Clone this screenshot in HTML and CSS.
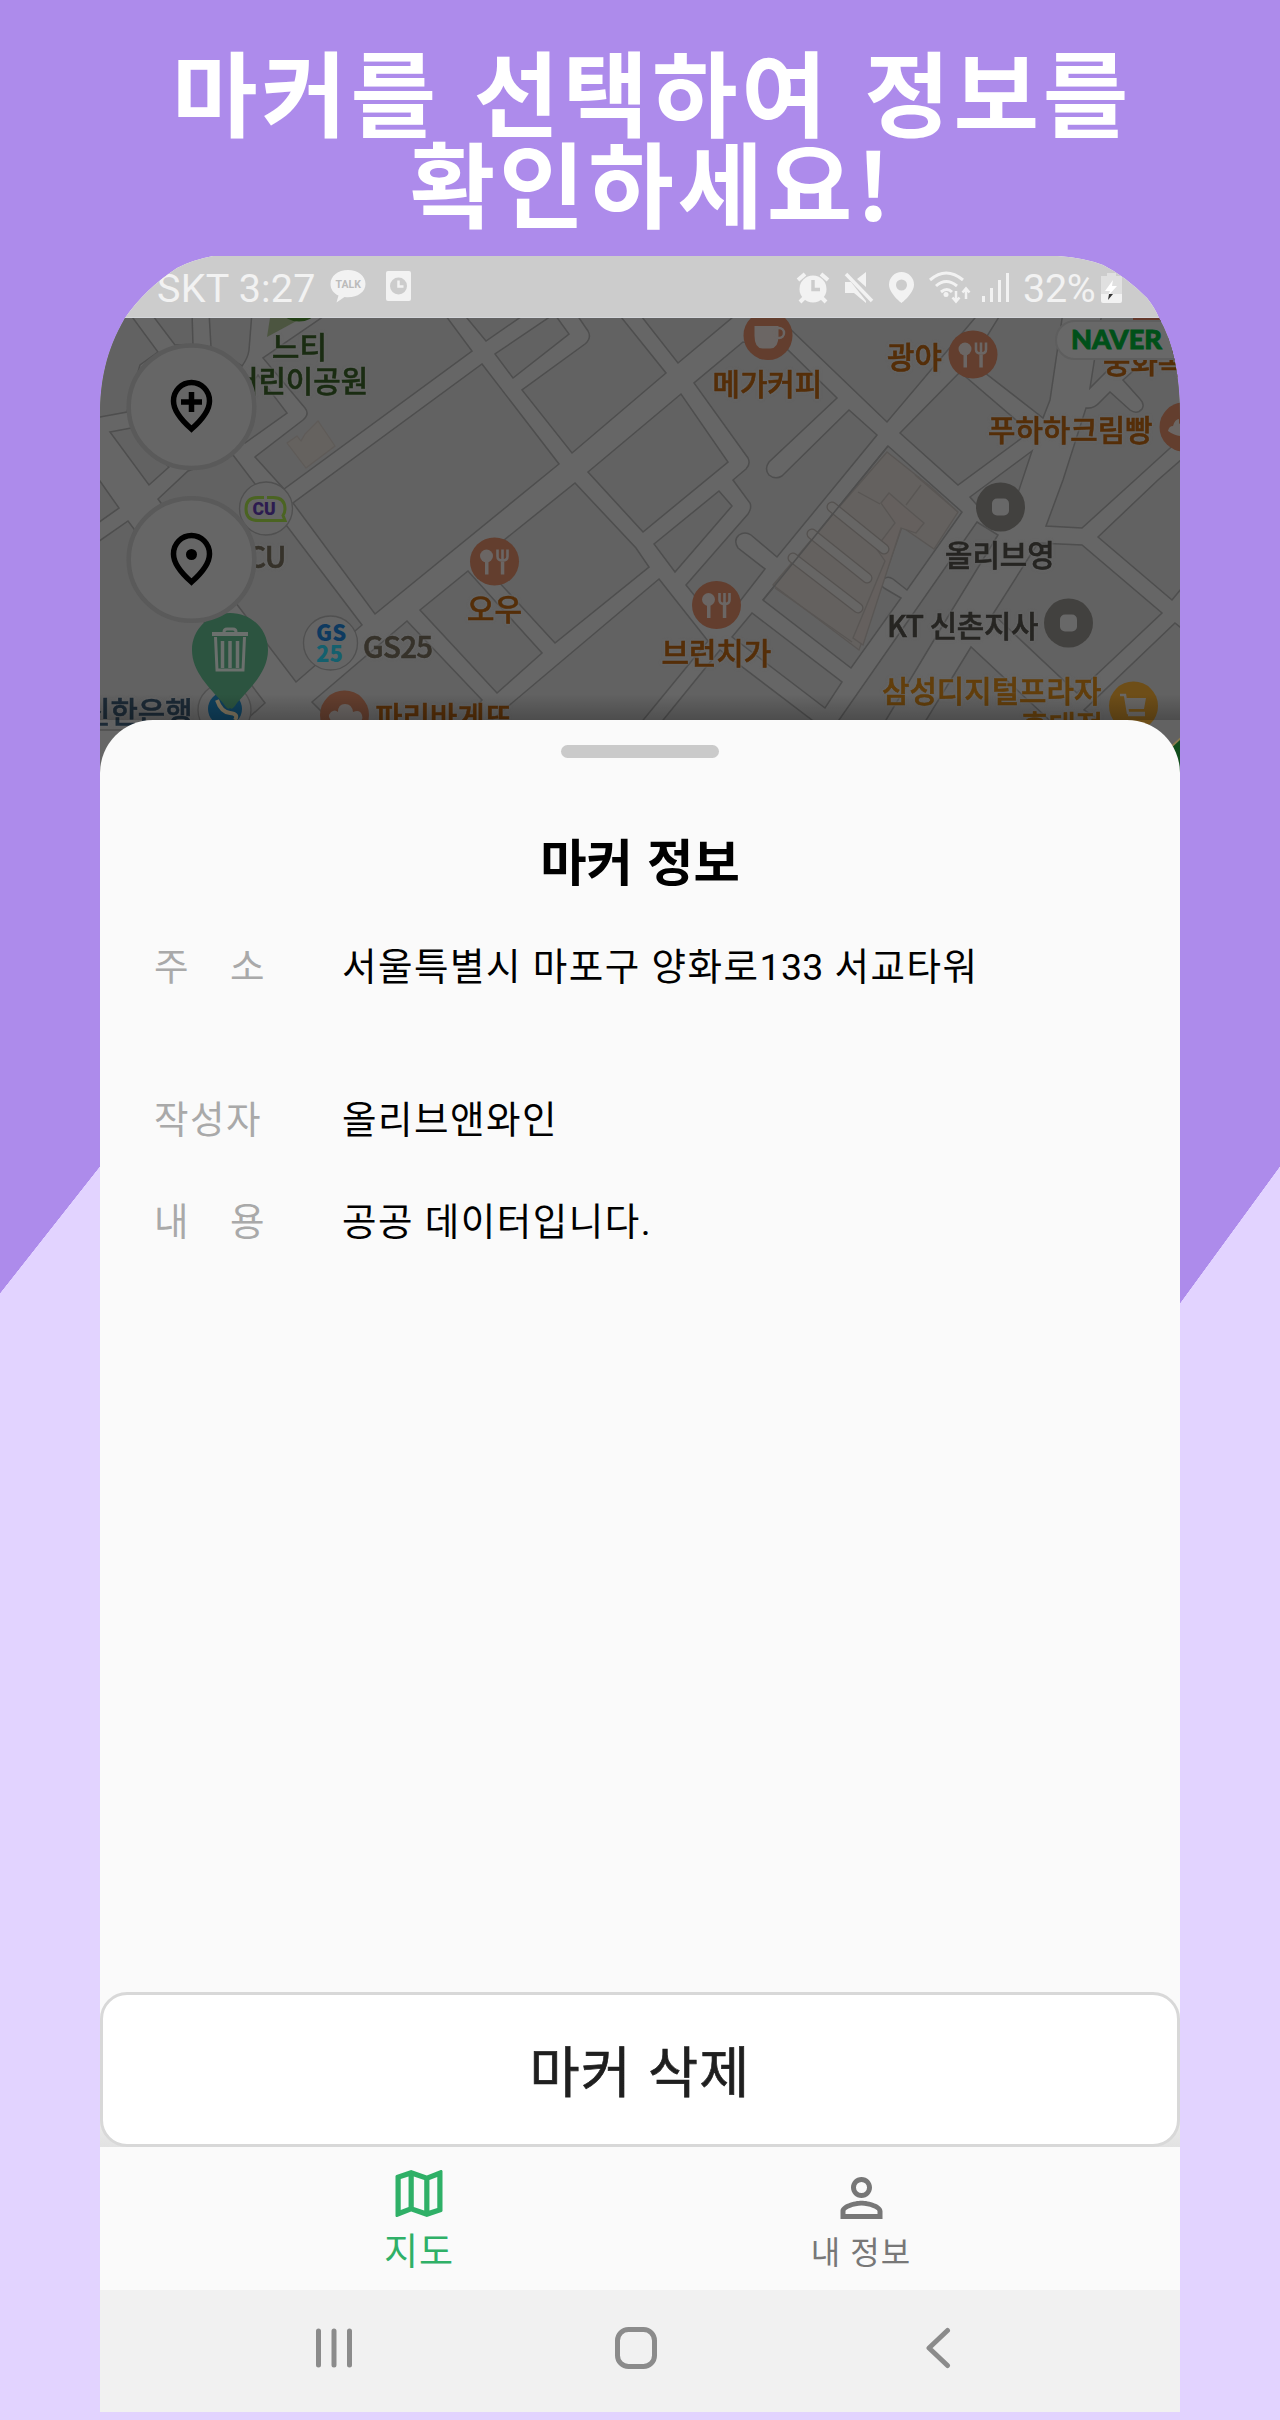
FILE: index.html
```html
<!DOCTYPE html>
<html lang="ko">
<head>
<meta charset="utf-8">
<title>마커 정보</title>
<link rel="stylesheet" href="styles.css">
</head>
<body>
<main class="promo">
  <h1 class="headline">마커를 선택하여 정보를<br>확인하세요!</h1>
  <section class="phone">
    <header class="status">
      <span class="carrier">SKT 3:27</span>
      <svg class="status-left" viewBox="330 270 82 36" width="82" height="36">
        <path class="lit" d="M348 271c-10 0-17.500 6-17.500 14 0 5 3 9.500 8 11.500l-2 7 8-5.500c11 1.500 21-4 21-13 0-8-7.500-14-17.500-14z"/>
        <text class="talk" x="335.500" y="289">TALK</text>
        <rect class="lit" x="386" y="272" width="25" height="30" rx="2"/>
        <circle class="cut" cx="398.500" cy="287" r="8.500"/>
        <path d="M398.500 281.500v6h5" fill="none" stroke="#f2f2f2" stroke-width="2.500"/>
      </svg>
      <svg class="status-right" viewBox="796 268 216 38" width="216" height="38">
        <circle class="lit" cx="813" cy="288" r="13.500"/>
        <path class="lit-line" d="M798 279l7-6M821 273l7 6M800 301l5-5M826 301l-5-5" stroke-width="4"/>
        <path d="M813 279v9.500h7" fill="none" stroke="#ccc" stroke-width="3.500"/>
        <path class="lit" d="M845 281h6l15 19v2l-12-10h-9zM857 278l9-7v15z"/>
        <path class="lit-line" d="M846 273l26 27" stroke-width="3.500"/>
        <path class="lit" fill-rule="evenodd" d="M901.500 271a12.500 12.500 0 0 0-12.500 12.500c0 9 12.500 18.500 12.500 18.500s12.500-9.500 12.500-18.500a12.500 12.500 0 0 0-12.500-12.500zm0 7.500a5.500 5.500 0 1 1 0 11 5.500 5.500 0 0 1 0-11z"/>
        <path class="lit-line" d="M930 279q16-14 33 0M936 285q10-9 21 0M941 291q6-5 11 0" stroke-width="3"/>
        <circle class="lit" cx="946" cy="293.500" r="2.500"/>
        <path class="lit-line" d="M956 290v9M952.500 296.500l3.500 4 3.500-4M966 298v-9M962.500 291.500l3.500-4 3.500 4" stroke-width="2.500"/>
        <path class="lit" d="M982 295h3v6h-3zM990 287h3v14h-3zM998 279h3v22h-3zM1006 272h3v29h-3z"/>
      </svg>
      <span class="battery">32%</span>
      <svg class="charge" viewBox="1101 270 22 33" width="22" height="33">
        <path fill="#e0e0e0" d="M1107 272h9v3h6v18h-21v-18h6z"/>
        <path class="lit" d="M1101 293h21v7q0 2-2 2h-17q-2 0-2-2z"/>
        <path fill="#fff" d="M1113 279l-8 11h5l-2 5 9-10h-5z"/>
        <path fill="#333" d="M1109 293h4l-5 6z"/>
      </svg>
    </header>

    <div class="stage">
      <svg class="map" viewBox="100 318 1080 462" width="1080" height="462">
        <defs>
          <g id="dish">
            <ellipse class="food" rx="24.500" ry="24"/>
            <circle class="pale" cx="-8" cy="-5.500" r="6.500"/>
            <path class="pale" d="M-9.500 0h3.500v13h-3.500zM6.300 0h3.500v13h-3.500z"/>
            <path fill="none" stroke="#6b6664" stroke-width="2.600" d="M3-12v7q0 4 5 4t5-4v-7M8-12v11"/>
          </g>
          <linearGradient id="fade" x1="0" y1="0" x2="0" y2="1">
            <stop offset="0" stop-color="#000" stop-opacity="0"/>
            <stop offset="1" stop-color="#000" stop-opacity=".22"/>
          </linearGradient>
        </defs>
        <rect x="100" y="318" width="1080" height="462" fill="#666"/>
        <g class="block">
          <path d="M90 310L127 310 158 352 140 365 127 412 95 418zM150 312L175 345 193 345 192 312zM209 312L211 347 242 366Q248 358 249 350L252 312z"/>
          <path d="M110 432L131 428 169 467 149 485zM95 474L119 508 95 525z"/>
          <path d="M330 312L263 358 305 408Q310 414 303 420L255 457 284 489 472 351 443 312z"/>
          <path d="M258 375L287 413 245 443 225 420z"/>
          <path d="M233 455L362 625 296 682 188 540 158 499 188 471z"/>
          <path d="M482 364L559 464 375 614 293 503z"/>
          <path d="M95 544L128 521 265 703 235 730 95 730z"/>
          <path d="M312 702L407 621 482 700 455 730 340 730zM420 610L468 571 542 653 497 693z"/>
          <path d="M488 553L575 483 636 548 649 567 555 643 485 567zM588 472L681 394 728 462 643 532z"/>
          <path d="M617 312L666 373 572 453 522 390 585 344Q592 338 588 331L575 312zM553 312L569 334 513 378 495 354 557 312zM462 312L486 341 528 312zM638 312L678 363 739 312z"/>
          <path d="M743 342L694 383 748 458Q751 464 746 469L733 480 750 503Q752 508 748 514L686 585 702 605 737 605 765 569 738 548Q733 540 739 535 745 531 751 535L777 557 877 435 849 410 782 476Q775 480 769 475 764 469 769 462L837 398 788 350z"/>
          <path d="M654 544L719 491 732 506 675 572zM659 579L708 641 635 730 480 730zM720 650L655 730 825 730z"/>
          <path d="M732 637L752 613 842 682 825 708zM763 600L888 446 962 512 907 590 893 579Q887 575 883 580 880 585 884 588L901 598 851 668z"/>
          <path d="M760 300L887 422 980 312zM1002 312L971 362 1043 418 1050 400 1063 312zM900 433L960 372 1030 432 958 485z"/>
          <path d="M1032 451L970 497 990 520 1014 505zM1102 312L1090 388 1112 366 1170 312z"/>
          <path d="M1086 408Q1094 409 1100 402L1110 392 1130 410Q1137 415 1142 409 1145 404 1140 399L1123 380 1190 320 1190 430 1135 480 1082 528 1046 526 1063 480z"/>
          <path d="M1098 537L1158 480 1190 452 1190 578 1172 600zM1038 543L1082 545 1162 613 1077 693 993 614z"/>
          <path d="M977 522L998 535 952 610 880 730 832 730zM971 647L920 730 1060 730zM1175 623L1190 635 1190 780 1084 710z"/>
        </g>
        <path fill="#4c5540" d="M270 318H302L267 337z"/>
        <ellipse cx="299" cy="312" rx="16" ry="9.500" fill="#234016"/>
        <path fill="#65625f" stroke="#5f5b58" stroke-width="1.200" d="M287 443L297 436 301 441 305 434 318 421 335 446 306 468z"/>
        <g fill="#64615f" stroke="#595654" stroke-width="1.300">
          <path d="M887 452L931 487 958 512 934 549 902 527 859 650 773 585 840 506z"/>
          <path fill="#65605e" d="M881 503L889 493 905 507 924 523 916 533 901 528 863 645 853 638 885 561 876 548 895 523z"/>
          <path fill="none" d="M858 492L880 504M921 485L906 505M775 588L852 642M915 475L958 512"/>
        </g>
        <path class="alley-edge" d="M832 507L884 549M812 534L867 578M793 558L858 608"/>
        <path class="alley" d="M832 507L884 549M812 534L867 578M793 558L858 608"/>
        <path class="edge" d="M888 446L763 600"/>

        <circle class="brand" cx="266" cy="508.500" r="26.500"/>
        <path d="M264 497.500h-6q-12 0-12 11.500t12 11.500h27l-2-5q2-3 2-6.500 0-11.500-12-11.500h-6" fill="none" stroke="#4b6422" stroke-width="3"/>
        <text class="cu" x="252.500" y="514.500">CU</text>
        <circle class="brand" cx="330.500" cy="643" r="27"/>
        <text class="gs" x="316" y="641">GS</text>
        <text class="gs teal" x="316" y="661.500">25</text>
        <circle class="brand" cx="224.500" cy="710" r="26.500"/>
        <circle cx="225" cy="709" r="17" fill="#10405c"/>
        <path d="M217 700q4 12 13 13t5 7" stroke="#7d735e" stroke-width="4" fill="none"/>

        <circle class="food" cx="768" cy="335.500" r="24.500"/>
        <path class="pale" d="M754.500 326h24v10q0 12-8 12.500h-8q-8-.500-8-12.500z"/>
        <circle cx="779" cy="333" r="5" fill="none" stroke="#6b6664" stroke-width="2.500"/>
        <use href="#dish" x="973" y="354.500"/>
        <use href="#dish" x="494.500" y="561.500"/>
        <use href="#dish" x="716.500" y="605"/>
        <circle class="food" cx="1184" cy="427" r="24.500"/>
        <path class="pale" d="M1168 431q1-5 5-5 2-7 6-7v5l8-6v16q-8 5-19-3z"/>
        <circle class="food" cx="344.500" cy="715" r="24.500"/>
        <path class="pale" d="M333 722q-7-5-2-10 4-3 7 0 0-8 7-8t8 8q7-3 9 3t-5 8z"/>
        <g fill="#42413f"><circle cx="1000.500" cy="507" r="24.500"/><circle cx="1068.500" cy="623" r="24.500"/></g>
        <g fill="#686868"><rect x="992" y="498.500" width="17" height="17" rx="5"/><rect x="1060" y="614.500" width="17" height="17" rx="5"/></g>
        <circle cx="1133.500" cy="706" r="24.500" fill="#6e4e18"/>
        <path d="M1120 695h5l3 18h17M1128 715h17" fill="none" stroke="#696765" stroke-width="2.500"/>
        <path d="M1126 698h20l-2 11h-16z" fill="#696765"/>
        <path d="M1133 318h28v3h-28z" fill="#63382a"/>

        <g class="label green"><text x="272" y="357.500">느티</text><text x="231" y="392">어린이공원</text></g>
        <g class="label brown">
          <text x="712.500" y="395">메가커피</text><text x="887" y="367.500">광야</text>
          <text x="1103" y="373">중화복</text><text x="988" y="441">푸하하크림빵</text>
          <text x="467" y="620">오우</text><text x="661.500" y="663.500">브런치가</text><text x="375" y="728">파리바게뜨</text>
        </g>
        <g class="label gold"><text x="882" y="702">삼성디지털프라자</text><text x="1021" y="737">홍대점</text></g>
        <g class="label dark"><text x="945" y="566">올리브영</text><text class="kt" x="887" y="636.500">KT 신촌지사</text></g>
        <g class="label olive latin"><text x="247" y="568">CU</text><text x="363" y="658">GS25</text></g>
        <text class="label navy" x="83" y="723">신한은행</text>

        <rect x="1056" y="321" width="150" height="38" rx="19" fill="#686868" stroke="#5e5e5e" stroke-width="2"/>
        <text class="naver" x="1071" y="349" textLength="91" lengthAdjust="spacingAndGlyphs">NAVER</text>

        <path fill="#2c5440" d="M230 613c-22 0-38 17-38 37 0 22 18 38 31 53q5 8 7 5 2 3 7-5c13-15 31-31 31-53 0-20-16-37-38-37z"/>
        <g fill="none" stroke="#6b706d">
          <path d="M212 634h36" stroke-width="4"/>
          <path d="M224 632q0-3 3-3h6q3 0 3 3" stroke-width="3"/>
          <path d="M215.500 637l1.500 33h26l1.500-33" stroke-width="3"/>
          <path d="M222.500 641v27M230 641v27M237.500 641v27" stroke-width="3.500"/>
        </g>

        <g fill="#666" stroke="#5a5a5a" stroke-width="4.500">
          <ellipse cx="191.500" cy="406.800" rx="62.800" ry="61.300"/><ellipse cx="191.500" cy="559.500" rx="62.800" ry="61.300"/>
        </g>
        <g fill="none" stroke="#000" stroke-width="5.500">
          <path d="M191.500 429c-8-7-18-18-18-28a18 18.500 0 0 1 36 0c0 10-10 21-18 28z"/>
          <path d="M191.500 392v20M181 402h21"/>
          <path d="M191.500 582c-8-7-18-18-18-28a18 18.500 0 0 1 36 0c0 10-10 21-18 28z"/>
        </g>
        <circle cx="191.500" cy="554.500" r="5.500"/>
        <path fill="#114d1c" stroke="#8a7a50" stroke-width="2" d="M1171 747l12-11v60z"/>
        <rect x="100" y="694" width="1080" height="26" fill="url(#fade)"/>
      </svg>

      <article class="sheet">
        <span class="handle"></span>
        <h2 class="sheet-title">마커 정보</h2>
        <dl class="details">
          <div class="row address"><dt><span>주</span><span>소</span></dt><dd>서울특별시 마포구 양화로<span class="number">133</span> 서교타워</dd></div>
          <div class="row"><dt>작성자</dt><dd>올리브앤와인</dd></div>
          <div class="row"><dt><span>내</span><span>용</span></dt><dd>공공 데이터입니다.</dd></div>
        </dl>
        <div class="action"><button class="delete">마커 삭제</button></div>
      </article>
    </div>

    <nav class="tabs">
      <a class="tab active">
        <svg viewBox="3 3 18 18" width="48" height="47"><path fill="currentColor" d="M20.500 3l-.16.030L15 5.100 9 3 3.360 4.900c-.21.070-.36.250-.36.480V20.500c0 .28.220.5.500.5l.160-.030L9 18.900l6 2.100 5.640-1.900c.21-.070.360-.250.360-.480V3.500c0-.280-.220-.5-.5-.5zM10 5.470l4 1.400v11.660l-4-1.400V5.470zm-5 .990l3-1.010v11.700l-3 1.160V6.460zm14 11.080l-3 1.010V6.860l3-1.160v11.840z"/></svg>
        <span>지도</span>
      </a>
      <a class="tab">
        <svg viewBox="4 4 16 16" width="43" height="42"><path fill="currentColor" d="M12 5.900a2.100 2.100 0 1 1 0 4.200 2.100 2.100 0 0 1 0-4.200m0 9c2.970 0 6.100 1.460 6.100 2.100v1.100H5.900V17c0-.640 3.130-2.100 6.100-2.100M12 4C9.790 4 8 5.790 8 8s1.790 4 4 4 4-1.790 4-4-1.790-4-4-4zm0 9c-2.670 0-8 1.340-8 4v3h16v-3c0-2.660-5.330-4-8-4z"/></svg>
        <span>내 정보</span>
      </a>
    </nav>
    <footer class="system">
      <svg viewBox="0 0 38 40" width="38" height="40"><path d="M3.500 3v34M19 3v34M34.500 3v34" stroke-width="5"/></svg>
      <svg viewBox="0 0 44 44" width="44" height="44"><rect x="3.500" y="3.500" width="37" height="37" rx="11" stroke-width="5"/></svg>
      <svg viewBox="0 0 26 42" width="26" height="42"><path d="M22.500 3.500L4 21l18.500 17.500" stroke-width="5"/></svg>
    </footer>
  </section>
</main>
</body>
</html>
```
FILE: styles.css
```css
* { box-sizing: border-box; margin: 0; padding: 0; }

body {
  width: 1280px;
  font-family: Roboto, "Noto Sans CJK KR", sans-serif;
}

.promo {
  display: flex;
  flex-direction: column;
  align-items: center;
  height: 2420px;
  background: linear-gradient(#ad8beb, #ad8beb) 0 0 / 100% 1166px no-repeat,
    linear-gradient(to bottom right, #ad8beb 50%, #e2d3ff 50.300%) 0 1166px / 100px 127px no-repeat,
    linear-gradient(to bottom right, #ad8beb 50%, #e2d3ff 50.300%) 1180px 1166px / 100px 137px no-repeat,
    #e2d3ff;
}

.headline {
  height: 256px;
  padding: 45px 0 0 24px;
  font: bold 93px/90.500px "Noto Sans CJK KR", sans-serif;
  letter-spacing: 3.700px;
  word-spacing: 4px;
  text-align: center;
  color: #fff;
  white-space: nowrap;
}

.phone {
  display: flex;
  flex-direction: column;
  width: 1080px;
  height: 2156px;
  background: #fafafa;
  clip-path: path("M0 161C0 125 6 95 25 62Q45 33 77 12Q92 4 113 0H958Q985 2 1003 9Q1025 20 1047 42Q1055 52 1059 62Q1080 98 1080 161V2156H0z");
}

.status {
  display: flex;
  height: 62px;
  padding: 12px 0 0 57px;
  background: #ccc;
  border-bottom: 1px solid #d4d6da;
  color: #f2f2f2;
  font-size: 39.500px;
  line-height: 42px;
}

.carrier { width: 173px; letter-spacing: .200px; white-space: nowrap; }
.status-right { margin-left: 384px; }
.battery { width: 78px; margin-left: 11px; letter-spacing: -.300px; white-space: nowrap; }
.status-left, .status-right, .charge { margin-top: 1px; }
.charge { margin-top: 3px; }
.lit { fill: #f2f2f2; }
.lit-line { fill: none; stroke: #f2f2f2; }
.cut { fill: #ccc; }
.talk { fill: #bbb; font: bold 10.500px Roboto, sans-serif; }

.stage {
  display: grid;
  width: 1080px;
  height: 1829px;
}

.map, .sheet { grid-area: 1 / 1; }
.map { display: block; }

.block { fill: #626262; stroke: #4e4e4e; stroke-width: 1.500; }
.edge { fill: none; stroke: #4e4e4e; stroke-width: 1.500; }
.alley { fill: none; stroke: #676665; stroke-width: 8.500; stroke-linecap: round; }
.alley-edge { fill: none; stroke: #555250; stroke-width: 11; stroke-linecap: round; }
.food { fill: #633e2e; }
.pale { fill: #6b6664; }
.brand { fill: #656565; stroke: #505050; stroke-width: 1.300; }
.label {
  font: 500 29.800px "Noto Sans CJK KR", sans-serif;
  stroke: currentColor;
  fill: currentColor;
  stroke-width: .600;
  filter: drop-shadow(0 0 1px #666) drop-shadow(0 0 1px #666);
}
.kt { letter-spacing: -.300px; word-spacing: -2px; }
.latin { font-size: 29.500px; letter-spacing: -.700px; }
.green { color: #1a2c12; }
.brown { color: #552e08; }
.gold { color: #623e0b; }
.dark { color: #262522; }
.olive { color: #36322a; }
.navy { color: #1c2a36; }
.cu { fill: #2c1b50; font: 900 17.500px Roboto, sans-serif; }
.gs { fill: #0e3a60; font: 900 22px "Noto Sans CJK KR", sans-serif; }
.teal { fill: #14606e; }
.naver { fill: #005019; font: 900 26px Lato, Roboto, sans-serif; stroke: #005019; stroke-width: .800; }

.sheet {
  display: flex;
  flex-direction: column;
  align-items: center;
  margin-top: 402px;
  height: 1427px;
  padding-top: 25px;
  border-radius: 53px 53px 0 0;
  background: #fafafa;
  z-index: 1;
}

.handle { width: 158px; height: 13px; border-radius: 7px; background: #cacaca; }

.sheet-title {
  margin-top: 67px;
  font: 700 50.400px/70px "Noto Sans CJK KR", sans-serif;
  color: #000;
}

.details {
  width: 1080px;
  padding: 44.500px 54px 0;
  font-size: 37.500px;
  line-height: 54px;
  letter-spacing: 1.500px;
}

.number { letter-spacing: .300px; }

.row { display: grid; grid-template-columns: 188px 1fr; margin-bottom: 48px; }
.address { margin-bottom: 99px; }
.row dt { display: flex; justify-content: space-between; width: 112px; color: #a9a9a9; }
.row dd { color: #000; white-space: nowrap; }

.action { width: 1080px; margin-top: auto; background: linear-gradient(#fafafa 50%, #e2e2e2); }

.delete {
  display: block;
  width: 1080px;
  height: 155px;
  padding-bottom: 2px;
  border: 3px solid #d8d8d8;
  border-radius: 27px;
  background: #fff;
  color: #1f1f1f;
  font: 400 54.500px/80px "Noto Sans CJK KR", sans-serif;
  letter-spacing: 1px;
  -webkit-text-stroke: .700px #1f1f1f;
}

.tabs {
  display: grid;
  grid-template-columns: 1fr 1fr;
  height: 143px;
  padding: 0 98px;
  background: #fafafa;
}

.tab {
  display: flex;
  flex-direction: column;
  align-items: center;
  padding-top: 30px;
  color: #777;
  font-size: 32px;
  line-height: 48px;
  letter-spacing: 1px;
}

.tab span { margin-top: 10px; }
.active { padding-top: 23px; color: #2fb067; font-size: 37px; }
.active span { margin-top: 12px; }

.system {
  display: grid;
  grid-template-columns: 302px 302px 302px;
  justify-content: center;
  justify-items: center;
  align-items: center;
  height: 122px;
  padding-bottom: 6px;
  padding-right: 9px;
  background: #f1f1f1;
}

.system svg { fill: none; stroke: #8b8b8b; stroke-linecap: round; stroke-linejoin: round; }
```
